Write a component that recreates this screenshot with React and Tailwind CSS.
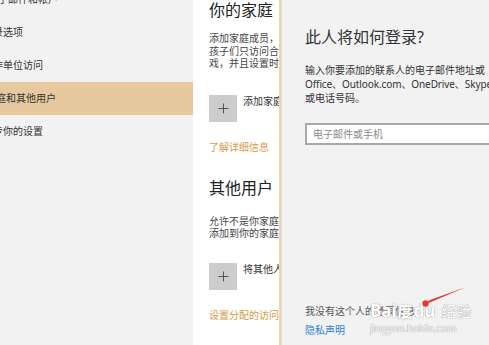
import React from 'react';

const font = "font-['Noto_Sans','Noto_Sans_CJK_SC',sans-serif]";

function PlusTile() {
  return (
    <span className="w-[28px] h-[27px] shrink-0 bg-[#cccccc] flex items-center justify-center">
      <svg width="11" height="11" viewBox="0 0 11 11">
        <path d="M5.5 0.5v10M0.5 5.5h10" stroke="#555" strokeWidth="1" />
      </svg>
    </span>
  );
}

export default function App() {
  const navItems = [
    { label: '子邮件和帐户', shift: '-ml-[2px]' },
    { label: '录选项', shift: '-ml-[7px]' },
    { label: '作单位访问', shift: '-ml-[7px]' },
    { label: '庭和其他用户', shift: '-ml-[4px]', active: true },
    { label: '步你的设置', shift: '-ml-[7px]' },
  ];

  return (
    <div className={`relative w-[489px] h-[345px] overflow-hidden flex bg-white ${font}`}>
      {/* settings nav */}
      <aside className="w-[193px] shrink-0 bg-[#f2f2f2] flex flex-col -mt-[17px] overflow-hidden">
        {navItems.map((item) => (
          <div
            key={item.label}
            className={`h-[33px] shrink-0 flex items-center whitespace-nowrap text-[10px] text-[#333] ${item.active ? 'bg-[#e6c99f]' : ''}`}
          >
            <span className={item.shift}>{item.label}</span>
          </div>
        ))}
      </aside>

      {/* family page */}
      <main className="w-[86px] shrink-0 bg-white pl-[16px] overflow-hidden flex flex-col whitespace-nowrap">
        <h2 className="text-[16px] leading-[20px] text-[#222]">你的家庭</h2>
        <p className="mt-[12px] text-[10px] leading-[12.5px] text-[#444]">
          添加家庭成员，以便每个人都拥有自己的登录<br />
          孩子们只访问合适的网站、时间限制、应用和游<br />
          戏，并且设置时间限制。
        </p>
        <div className="mt-[25px] flex items-start gap-[6px]">
          <PlusTile />
          <span className="text-[10px] leading-[12px] text-[#333]">添加家庭成员</span>
        </div>
        <a className="mt-[18px] text-[10px] leading-[14px] text-[#d99a45]">了解详细信息</a>

        <h2 className="mt-[24px] text-[16px] leading-[20px] text-[#222]">其他用户</h2>
        <p className="mt-[17px] text-[10px] leading-[12.5px] text-[#444]">
          允许不是你家庭一员的用户使用自己的帐户<br />
          添加到你的家庭，这样不会将他们
        </p>
        <div className="mt-[23px] flex items-start gap-[6px]">
          <PlusTile />
          <span className="text-[10px] leading-[12px] text-[#333]">将其他人添加到这台电脑</span>
        </div>
        <a className="mt-[18px] text-[10px] leading-[14px] text-[#d99a45]">设置分配的访问权限</a>
      </main>

      <div className="w-[3px] shrink-0 bg-[#ead7bb]" />

      {/* sign-in dialog */}
      <section className="flex-1 min-w-0 bg-[#f2f2f2] pl-[23px] pt-[27px] pb-[8px] flex flex-col whitespace-nowrap overflow-hidden">
        <h1 className="text-[16px] leading-[20px] text-[#333]">此人将如何登录?</h1>
        <p className="mt-[16px] text-[10px] leading-[14px] text-[#333]">
          输入你要添加的联系人的电子邮件地址或<br />
          <span className="tracking-[-0.1px]">Office、Outlook.com、OneDrive、Skype 或 Xbox</span><br />
          或电话号码。
        </p>
        <div className="mt-[18px] w-[220px] h-[22px] shrink-0 border-2 border-[#a8a8a8] bg-white flex items-center pl-[6px] text-[10px] text-[#8a8a8a]">
          电子邮件或手机
        </div>
        <div className="flex-1" />
        <p className="text-[10px] leading-[14px] text-[#555]">我没有这个人的登录信息</p>
        <a className="mt-[5px] text-[10px] leading-[14px] text-[#2b7fd6]">隐私声明</a>
      </section>

      {/* watermark + red arrow overlay */}
      <div className="absolute left-[370px] top-[288px] w-[119px] pointer-events-none whitespace-nowrap">
        <div className="flex items-end text-[17px] leading-[18px] text-white font-bold [text-shadow:0_0_1px_#9a9a9a,0_0_1px_#9a9a9a] mt-[14px]">
          <span>Bai</span>
          <span className="text-[15px] mx-[1px]">度</span>
          <span>du</span>
          <span className="ml-[6px] text-[15px] font-normal">经验</span>
        </div>
        <div className="text-[10px] leading-[12px] text-white [text-shadow:0_0_1px_#9a9a9a,0_0_1px_#9a9a9a] mt-[2px]">
          jingyan.baidu.com
        </div>
      </div>
      <svg className="absolute left-[400px] top-[275px] pointer-events-none" width="89" height="40" viewBox="0 0 89 40">
        <g fill="#f0f0f0" opacity="0.9">
          <ellipse cx="12" cy="13" rx="2.5" ry="3.5" />
          <ellipse cx="18" cy="10" rx="2.5" ry="3.5" />
          <ellipse cx="24" cy="13" rx="2.5" ry="3.5" />
          <ellipse cx="18" cy="21" rx="5" ry="4" />
        </g>
        <path d="M66 12 L31 27 L23 30 L30 25 Z" fill="#e53a2f" />
        <circle cx="25.5" cy="28.5" r="3.2" fill="#e53a2f" />
      </svg>
    </div>
  );
}
